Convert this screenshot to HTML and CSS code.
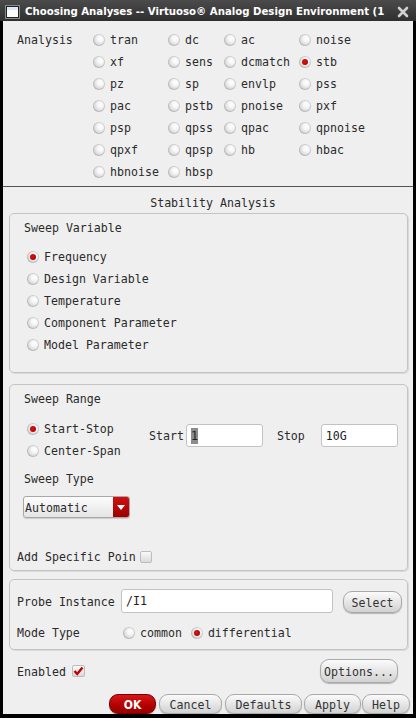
FILE: index.html
```html
<!DOCTYPE html>
<html>
<head>
<meta charset="utf-8">
<link rel="stylesheet" href="styles.css">
</head>
<body>
<div class="frame">
  <div class="titlebar">
    <span class="wicon"></span>
    <span class="title">Choosing Analyses -- Virtuoso® Analog Design Environment (1</span>
    <svg class="close" width="12" height="12" viewBox="0 0 12 12"><path d="M2 2 L10 10 M10 2 L2 10" stroke="#d0d0d0" stroke-width="2.6" stroke-linecap="round"/></svg>
  </div>
  <div class="content">
    <div class="analysis">
      <div class="alabel">Analysis</div>
      <div class="agrid">
        <label class="opt"><span class="radio"></span>tran</label>
        <label class="opt"><span class="radio"></span>dc</label>
        <label class="opt"><span class="radio"></span>ac</label>
        <label class="opt"><span class="radio"></span>noise</label>
        <label class="opt"><span class="radio"></span>xf</label>
        <label class="opt"><span class="radio"></span>sens</label>
        <label class="opt"><span class="radio"></span>dcmatch</label>
        <label class="opt"><span class="radio on"></span>stb</label>
        <label class="opt"><span class="radio"></span>pz</label>
        <label class="opt"><span class="radio"></span>sp</label>
        <label class="opt"><span class="radio"></span>envlp</label>
        <label class="opt"><span class="radio"></span>pss</label>
        <label class="opt"><span class="radio"></span>pac</label>
        <label class="opt"><span class="radio"></span>pstb</label>
        <label class="opt"><span class="radio"></span>pnoise</label>
        <label class="opt"><span class="radio"></span>pxf</label>
        <label class="opt"><span class="radio"></span>psp</label>
        <label class="opt"><span class="radio"></span>qpss</label>
        <label class="opt"><span class="radio"></span>qpac</label>
        <label class="opt"><span class="radio"></span>qpnoise</label>
        <label class="opt"><span class="radio"></span>qpxf</label>
        <label class="opt"><span class="radio"></span>qpsp</label>
        <label class="opt"><span class="radio"></span>hb</label>
        <label class="opt"><span class="radio"></span>hbac</label>
        <label class="opt"><span class="radio"></span>hbnoise</label>
        <label class="opt"><span class="radio"></span>hbsp</label>
      </div>
    </div>
    <div class="sep"></div>
    <div class="heading">Stability Analysis</div>

    <div class="group g1">
      <div class="gtitle">Sweep Variable</div>
      <div class="vlist">
        <label class="opt"><span class="radio on"></span>Frequency</label>
        <label class="opt"><span class="radio"></span>Design Variable</label>
        <label class="opt"><span class="radio"></span>Temperature</label>
        <label class="opt"><span class="radio"></span>Component Parameter</label>
        <label class="opt"><span class="radio"></span>Model Parameter</label>
      </div>
    </div>

    <div class="group g2">
      <div class="gtitle">Sweep Range</div>
      <div class="rangerow">
        <div class="rlist">
          <label class="opt"><span class="radio on"></span>Start-Stop</label>
          <label class="opt"><span class="radio"></span>Center-Span</label>
        </div>
        <span class="flabel start">Start</span>
        <div class="field f-start"><span class="sel">1</span></div>
        <span class="flabel stop">Stop</span>
        <div class="field f-stop">10G</div>
      </div>
      <div class="gtitle stype">Sweep Type</div>
      <div class="combo"><span class="ctext">Automatic</span><span class="carrow"><svg width="8" height="5" viewBox="0 0 8 5"><path d="M0 0 H8 L4 5 Z" fill="#fff"/></svg></span></div>
      <div class="addrow"><span>Add Specific Poin</span><span class="check"></span></div>
    </div>

    <div class="group g3">
      <div class="proberow">
        <span class="plabel">Probe Instance</span>
        <div class="field f-probe">/I1</div>
        <span class="btn sel-btn">Select</span>
      </div>
      <div class="moderow">
        <span class="plabel mlabel">Mode Type</span>
        <label class="opt"><span class="radio"></span>common</label>
        <label class="opt diff"><span class="radio on"></span>differential</label>
      </div>
    </div>

    <div class="enrow">
      <span class="enlabel">Enabled</span>
      <span class="check checked"><svg width="11" height="10" viewBox="0 0 11 10"><path d="M1.5 5 L4.2 8 L9.5 1.5" stroke="#c00000" stroke-width="2.4" fill="none"/></svg></span>
      <span class="btn opts">Options...</span>
    </div>

    <div class="btnrow">
      <span class="btn ok">OK</span>
      <span class="btn b-cancel">Cancel</span>
      <span class="btn b-def">Defaults</span>
      <span class="btn b-apply">Apply</span>
      <span class="btn b-help">Help</span>
    </div>
  </div>
</div>
</body>
</html>
```
FILE: styles.css
```css
html, body {
  margin: 0;
  padding: 0;
  background: #000;
}
body {
  width: 416px;
  height: 718px;
  overflow: hidden;
  font-family: "DejaVu Sans Mono", monospace;
  font-size: 11.6px;
  color: #2b2b2b;
}
.frame {
  display: flex;
  flex-direction: column;
}
.titlebar {
  height: 21px;
  background: linear-gradient(#4b4b4b, #2f2f2f);
  display: flex;
  align-items: center;
  padding: 0 7px 0 5px;
  box-sizing: border-box;
}
.wicon {
  width: 11px;
  height: 10px;
  border: 1px solid #222;
  background: linear-gradient(#dfe8f4 0 3px, #fbfbfb 3px);
  box-shadow: 0 0 0 1px #8a8a8a;
  margin: 3px 6px 0 1px;
  flex: none;
}
.title {
  font-family: "DejaVu Sans", sans-serif;
  font-stretch: condensed;
  font-weight: bold;
  font-size: 11.3px;
  color: #fff;
  white-space: nowrap;
  flex: none;
  margin-top: 1px;
}
.close {
  flex: none;
  margin-left: auto;
  margin-top: 2px;
}
.content {
  margin: 0 3px;
  background: #efefef;
  display: flex;
  flex-direction: column;
}
.opt {
  display: flex;
  align-items: center;
  height: 22px;
  white-space: nowrap;
}
.radio {
  width: 12px;
  height: 12px;
  border-radius: 50%;
  margin-right: 5px;
  flex: none;
  position: relative;
  box-sizing: border-box;
  background: radial-gradient(circle at 62% 38%, #ffffff 0, #f6f6f6 28%, #d9d9d9 62%, #a9a9a9 100%);
  box-shadow: inset 0 0 0 1px rgba(120,120,120,0.25);
}
.radio.on::after {
  content: "";
  position: absolute;
  left: 3px;
  top: 3px;
  width: 6px;
  height: 6px;
  border-radius: 50%;
  background: radial-gradient(circle at 40% 40%, #e01010, #a00000);
}
.analysis {
  display: flex;
  padding: 8px 0 0 14px;
}
.alabel {
  width: 76px;
  height: 22px;
  line-height: 22px;
  flex: none;
}
.agrid {
  display: grid;
  grid-template-columns: 75px 56px 75px 1fr;
}
.sep {
  height: 1px;
  background: #555;
  margin-top: 3px;
}
.heading {
  height: 16px;
  line-height: 16px;
  text-align: center;
  padding-left: 10px;
  margin-top: 8px;
}
.group {
  margin: 2px 5px 0 6px;
  border: 1px solid #c4c4c4;
  border-radius: 5px;
  box-shadow: 1px 1px 0 #dadada;
  display: flex;
  flex-direction: column;
  padding: 3px 0 0 14px;
}
.gtitle {
  height: 22px;
  line-height: 23px;
}
.g1 {
  padding-bottom: 17px;
}
.vlist {
  margin-top: 6px;
  padding-left: 3px;
  display: flex;
  flex-direction: column;
}
.vlist .opt, .rlist .opt {
  padding-top: 1px;
  height: 21px;
}
.g2 {
  margin-top: 11px;
  padding-bottom: 5px;
}
.rangerow {
  display: flex;
  align-items: flex-start;
  margin-top: 7px;
}
.rlist {
  width: 122px;
  padding-left: 3px;
  display: flex;
  flex-direction: column;
  flex: none;
}
.flabel {
  margin-top: 7px;
  height: 23px;
  line-height: 24px;
}
.start { margin-left: 0; }
.stop { margin-left: 14px; }
.field {
  margin-top: 7px;
  height: 23px;
  box-sizing: border-box;
  background: #fff;
  border: 1px solid #c2c2c2;
  border-radius: 3px;
  line-height: 22px;
  padding-left: 4px;
  color: #222;
}
.f-start { width: 77px; margin-left: 2px; }
.f-stop { width: 77px; margin-left: 16px; }
.sel {
  background: #8c8c8c;
  color: #222;
  padding: 1px 0;
}
.stype {
  margin-top: 7px;
}
.combo {
  margin: 6px 0 0 -1px;
  width: 107px;
  height: 22px;
  box-sizing: border-box;
  border: 1px solid #a8a8a8;
  border-radius: 3px;
  background: linear-gradient(#fdfdfd, #e4e4e4);
  display: flex;
  align-items: center;
  overflow: hidden;
  box-shadow: 0 1px 1px rgba(0,0,0,0.15);
}
.ctext {
  flex: 1;
  padding-left: 1px;
  padding-top: 1px;
}
.carrow {
  width: 16px;
  height: 100%;
  background: linear-gradient(#cf1010, #9c0000);
  display: flex;
  align-items: center;
  justify-content: center;
}
.addrow {
  margin: 31px 0 0 -7px;
  height: 16px;
  display: flex;
  align-items: center;
}
.check {
  width: 12px;
  height: 12px;
  margin-left: 4px;
  box-sizing: border-box;
  border: 1px solid #bcbcbc;
  border-radius: 2px;
  background: linear-gradient(#fafafa, #dadada);
  display: flex;
  align-items: center;
  justify-content: center;
}
.g3 {
  margin-top: 8px;
  padding: 9px 5px 6px 7px;
}
.proberow {
  display: flex;
  align-items: center;
  height: 24px;
}
.plabel {
  width: 104px;
  flex: none;
  padding-top: 1px;
}
.f-probe {
  margin-top: 0;
  width: 212px;
  height: 24px;
  line-height: 23px;
}
.btn {
  display: flex;
  align-items: center;
  justify-content: center;
  box-sizing: border-box;
  border: 1px solid #a9a9a9;
  border-radius: 9px;
  background: linear-gradient(#fbfbfb, #e2e2e2 60%, #d2d2d2);
  box-shadow: 0 1px 1px rgba(0,0,0,0.25);
  color: #333;
  white-space: nowrap;
  padding-top: 1px;
}
.sel-btn {
  margin-left: 10px;
  width: 59px;
  height: 22px;
  margin-top: 2px;
}
.moderow {
  display: flex;
  align-items: center;
  margin-top: 8px;
}
.moderow .opt {
  padding-top: 1px;
  height: 21px;
}
.mlabel {
  width: 106px;
}
.diff {
  margin-left: 9px;
}
.enrow {
  display: flex;
  align-items: center;
  margin-top: 9px;
  padding: 0 15px 0 14px;
  height: 24px;
}
.enlabel {
  margin-right: 1px;
  padding-top: 1px;
}
.checked {
  margin-left: 5px;
  width: 13px;
  height: 12px;
}
.opts {
  margin-left: auto;
  width: 78px;
  height: 24px;
}
.btnrow {
  display: flex;
  justify-content: flex-end;
  margin-top: 11px;
  padding-right: 3px;
  height: 20px;
}
.btnrow .btn {
  height: 20px;
}
.ok {
  width: 47px;
  background: linear-gradient(#d81818, #b00000 60%, #9a0000);
  border-color: #7a0000;
  color: #fff;
  font-family: "DejaVu Sans", sans-serif;
  font-stretch: condensed;
  font-weight: bold;
  font-size: 12px;
}
.b-cancel { width: 63px; margin-left: 3px; }
.b-def { width: 77px; margin-left: 3px; }
.b-apply { width: 57px; margin-left: 2px; }
.b-help { width: 48px; margin-left: 1px; }
```
